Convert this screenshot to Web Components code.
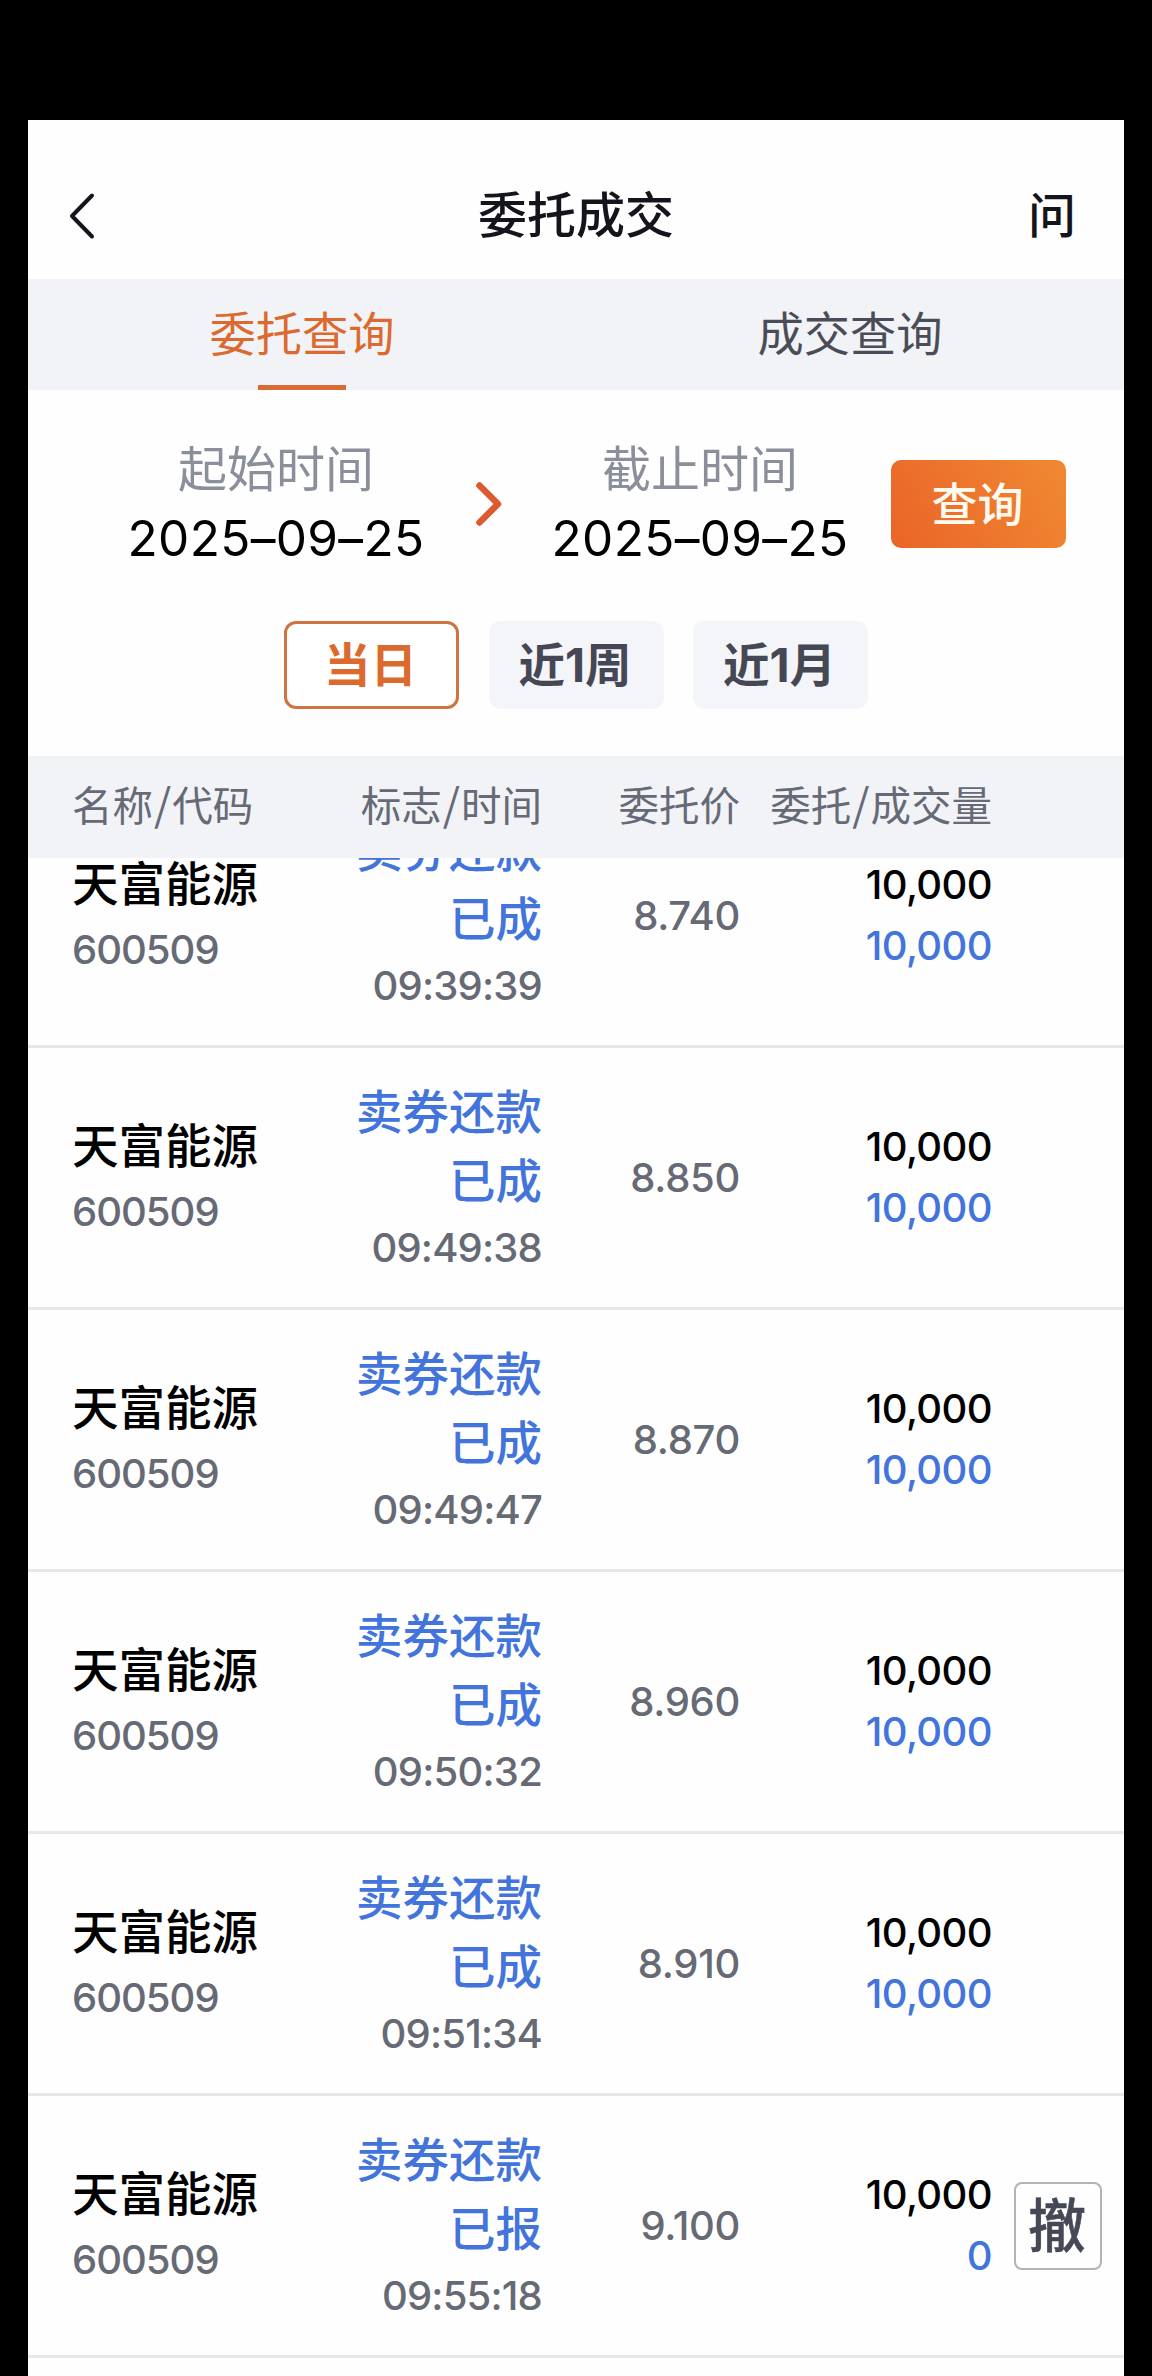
<!DOCTYPE html>
<html lang="zh-CN">
<head>
<meta charset="utf-8">
<title>委托成交</title>
<style>
  html, body {
    margin: 0;
    background: #000;
  }
  body {
    height: 2376px;
    overflow: hidden;
    font-family: Inter, "Noto Sans CJK SC", sans-serif;
  }
</style>
</head>
<body>
<trade-app></trade-app>

<script>
const ORDERS = [
  { time: '09:39:39', price: '8.740', state: '已成', filled: '10,000' },
  { time: '09:49:38', price: '8.850', state: '已成', filled: '10,000' },
  { time: '09:49:47', price: '8.870', state: '已成', filled: '10,000' },
  { time: '09:50:32', price: '8.960', state: '已成', filled: '10,000' },
  { time: '09:51:34', price: '8.910', state: '已成', filled: '10,000' },
  { time: '09:55:18', price: '9.100', state: '已报', filled: '0', cancel: true },
];

class BaseElement extends HTMLElement {
  constructor() {
    super();
    this.attachShadow({ mode: 'open' });
  }

  connectedCallback() {
    this.render();
  }
}

class NavHeader extends BaseElement {
  render() {
    this.shadowRoot.innerHTML = `
      <style>
        :host {
          display: grid;
          grid-template-columns: 120px 1fr 120px;
          align-items: center;
          box-sizing: border-box;
          height: 159px;
          padding-top: 31px;
          color: #14151c;
        }
        svg {
          display: block;
          margin-left: 38px;
        }
        .title {
          font-size: 49px;
          line-height: 128px;
          font-weight: 500;
          text-align: center;
        }
        .ask {
          font-size: 48px;
          line-height: 129px;
          font-weight: 500;
          text-align: right;
          padding-right: 48px;
        }
      </style>
      <svg width="30" height="48" viewBox="0 0 30 48" fill="none" stroke="#14151c"
        stroke-width="4" stroke-linecap="round" stroke-linejoin="round">
        <path d="M26 3.500 L6 24 L26 44.500"/>
      </svg>
      <div class="title"><slot></slot></div>
      <div class="ask">问</div>
    `;
  }
}

class TabItem extends BaseElement {
  render() {
    this.shadowRoot.innerHTML = `
      <style>
        :host {
          display: flex;
          flex: 1;
          flex-direction: column;
          align-items: center;
          color: #4a4d58;
          font-size: 46.250px;
        }
        :host([active]) { color: #dc6a2e; }
        .label {
          height: 106px;
          line-height: 110px;
        }
        .bar {
          width: 88px;
          height: 6px;
        }
        :host([active]) .bar { background: #dc6a35; }
      </style>
      <div class="label"><slot></slot></div>
      <div class="bar"></div>
    `;
  }
}

class TabBar extends BaseElement {
  render() {
    this.shadowRoot.innerHTML = `
      <style>
        :host {
          display: flex;
          height: 111px;
          background: #f2f3f7;
        }
      </style>
      <slot></slot>
    `;
  }
}

class DateField extends BaseElement {
  render() {
    this.shadowRoot.innerHTML = `
      <style>
        :host {
          display: block;
          width: 348px;
          padding-bottom: 8px;
          text-align: center;
          font-size: 49px;
          white-space: nowrap;
        }
        .label {
          line-height: 77px;
          color: #8b8e9b;
        }
        .date {
          font-size: 49.500px;
          line-height: 61px;
          letter-spacing: 0.350px;
          color: #000;
        }
      </style>
      <div class="label">${this.getAttribute('label')}</div>
      <div class="date">${this.getAttribute('value')}</div>
    `;
  }
}

class RangeChip extends BaseElement {
  render() {
    this.shadowRoot.innerHTML = `
      <style>
        :host {
          display: block;
          box-sizing: border-box;
          width: 175px;
          height: 88px;
          padding-right: 2px;
          border: 3px solid transparent;
          border-radius: 12px;
          background: #f4f5f9 border-box;
          color: #454854;
          font-size: 46.500px;
          font-weight: 700;
          line-height: 82px;
          text-align: center;
        }
        :host([active]) {
          border-color: #cf7440;
          background: #fff;
          color: #dc6a2e;
        }
      </style>
      <slot></slot>
    `;
  }
}

class SearchPanel extends BaseElement {
  render() {
    this.shadowRoot.innerHTML = `
      <style>
        :host {
          display: block;
          box-sizing: border-box;
          height: 366px;
          padding-top: 40px;
        }
        .dates {
          display: flex;
          align-items: center;
          height: 148px;
          padding-left: 74px;
        }
        .arrow {
          display: flex;
          justify-content: center;
          width: 76px;
        }
        button {
          width: 175px;
          height: 88px;
          margin: 0 0 0 17px;
          padding: 0 2px 0 0;
          border: 0;
          border-radius: 10px;
          background: linear-gradient(60deg, #ea6428, #f08932);
          color: #fffaf0;
          font: 500 46px/88px Inter, "Noto Sans CJK SC", sans-serif;
        }
        .chips {
          display: flex;
          justify-content: center;
          gap: 29.500px;
          margin-top: 43px;
        }
      </style>
      <div class="dates">
        <date-field label="起始时间" value="2025–09–25"></date-field>
        <div class="arrow">
          <svg width="30" height="48" viewBox="0 0 30 48" fill="none" stroke="#dc5a2f"
            stroke-width="6.500" stroke-linecap="round" stroke-linejoin="round">
            <path d="M6.500 5.500 L25 24 L6.500 42.500"/>
          </svg>
        </div>
        <date-field label="截止时间" value="2025–09–25"></date-field>
        <button>查询</button>
      </div>
      <div class="chips">
        <range-chip active>当日</range-chip>
        <range-chip>近1周</range-chip>
        <range-chip>近1月</range-chip>
      </div>
    `;
  }
}

class TableHead extends BaseElement {
  render() {
    this.shadowRoot.innerHTML = `
      <style>
        :host {
          display: grid;
          grid-template-columns: var(--columns);
          height: 102px;
          padding-left: 44px;
          background: #f2f3f7;
          color: #666a76;
          font-size: 40.500px;
          line-height: 102px;
          text-align: right;
          white-space: nowrap;
        }
        .first { text-align: left; }
        i {
          margin: 0 1px;
          font-family: "Noto Sans CJK SC", sans-serif;
          font-size: 44px;
          font-style: normal;
          line-height: 1;
        }
      </style>
      <span class="first">名称<i>/</i>代码</span>
      <span>标志<i>/</i>时间</span>
      <span>委托价</span>
      <span>委托<i>/</i>成交量</span>
    `;
  }
}

class OrderRow extends BaseElement {
  set order(value) {
    this._order = value;
    if (this.isConnected) this.render();
  }

  render() {
    const order = this._order;
    if (!order) return;

    this.shadowRoot.innerHTML = `
      <style>
        :host {
          display: grid;
          grid-template-columns: var(--columns);
          align-items: center;
          box-sizing: border-box;
          height: 262px;
          padding-left: 44px;
          border-bottom: 3px solid #e8e8ea;
          color: #666a75;
          font-size: 40px;
          font-weight: 450;
          text-align: right;
          white-space: nowrap;
        }
        .stock {
          padding-top: 4px;
          text-align: left;
        }
        .name {
          color: #000;
          font-size: 46.500px;
          font-weight: 500;
          line-height: 64px;
        }
        .code {
          line-height: 67px;
          letter-spacing: -1px;
        }
        .status { padding-top: 1px; }
        .flag {
          color: #4274dc;
          font-size: 46.500px;
          font-weight: 500;
          line-height: 69.500px;
        }
        .time {
          line-height: 62px;
          letter-spacing: -0.800px;
        }
        .price { letter-spacing: -0.300px; }
        .num {
          line-height: 61px;
          font-weight: 500;
          letter-spacing: -0.600px;
        }
        .qty { padding-bottom: 2px; }
        .total { color: #000; }
        .filled { color: #4274dc; }
        .cancel {
          justify-self: center;
          box-sizing: border-box;
          width: 88px;
          height: 88px;
          padding-right: 2px;
          border: 2px solid #b2b3b5;
          border-radius: 8px;
          color: #464955;
          font-size: 58px;
          font-weight: 500;
          line-height: 84px;
          text-align: center;
          -webkit-text-stroke: 0.500px #464955;
        }
      </style>
      <div class="stock">
        <div class="name">天富能源</div>
        <div class="code">600509</div>
      </div>
      <div class="status">
        <div class="flag">卖券还款</div>
        <div class="flag">${order.state}</div>
        <div class="time">${order.time}</div>
      </div>
      <div class="price">${order.price}</div>
      <div class="qty">
        <div class="num total">10,000</div>
        <div class="num filled">${order.filled}</div>
      </div>
      ${order.cancel ? '<div class="cancel">撤</div>' : ''}
    `;
  }
}

class OrderList extends BaseElement {
  render() {
    // the list is scrolled a little, so the first row starts under the head
    this.shadowRoot.innerHTML = `
      <style>
        :host {
          display: block;
          flex: 1;
          min-height: 0;
          overflow: hidden;
        }
        .rows { margin-top: -72px; }
      </style>
      <div class="rows"></div>
    `;

    const rows = this.shadowRoot.querySelector('.rows');
    ORDERS.forEach((order) => {
      const row = document.createElement('order-row');
      row.order = order;
      rows.appendChild(row);
    });
  }
}

class TradeApp extends BaseElement {
  render() {
    this.shadowRoot.innerHTML = `
      <style>
        :host {
          display: block;
          box-sizing: border-box;
          height: 2376px;
          padding: 120px 28px 0;
          background: #000;
        }
        .screen {
          --columns: 214px 256px 198px 252px 132px;
          display: flex;
          flex-direction: column;
          height: 100%;
          background: #fefefe;
        }
      </style>
      <div class="screen">
        <nav-header>委托成交</nav-header>
        <tab-bar>
          <tab-item active>委托查询</tab-item>
          <tab-item>成交查询</tab-item>
        </tab-bar>
        <search-panel></search-panel>
        <table-head></table-head>
        <order-list></order-list>
      </div>
    `;
  }
}

customElements.define('nav-header', NavHeader);
customElements.define('tab-item', TabItem);
customElements.define('tab-bar', TabBar);
customElements.define('date-field', DateField);
customElements.define('range-chip', RangeChip);
customElements.define('search-panel', SearchPanel);
customElements.define('table-head', TableHead);
customElements.define('order-row', OrderRow);
customElements.define('order-list', OrderList);
customElements.define('trade-app', TradeApp);
</script>
</body>
</html>
